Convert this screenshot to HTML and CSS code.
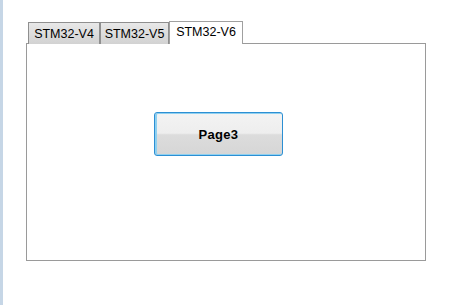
FILE: index.html
```html
<!DOCTYPE html>
<html>
<head>
<meta charset="utf-8">
<link rel="stylesheet" href="styles.css">
</head>
<body>
<div class="frame">
  <div class="sidebar"></div>
  <div class="content">
    <div class="tabs">
      <div class="tab t1">STM32-V4</div>
      <div class="tab t2">STM32-V5</div>
      <div class="tab active">STM32-V6</div>
    </div>
    <div class="panel">
      <button class="btn">Page3</button>
    </div>
  </div>
</div>
</body>
</html>
```
FILE: styles.css
```css
html, body {
  margin: 0;
  padding: 0;
  background: #ffffff;
}
.frame {
  display: flex;
  width: 465px;
  height: 305px;
}
.sidebar {
  width: 3px;
  background: #c6d6e6;
  flex: none;
}
.content {
  padding-left: 23px;
  padding-top: 21px;
  font-family: "Liberation Sans", Arial, sans-serif;
}
.tabs {
  display: flex;
  align-items: flex-end;
  margin-left: 2px;
  height: 23px;
  position: relative;
  z-index: 1;
}
.tab {
  box-sizing: border-box;
  height: 22px;
  border: 1px solid #8f8f8f;
  border-bottom: none;
  background: linear-gradient(#e8e8e8, #d2d2d2);
  font-size: 12.5px;
  color: #000;
  line-height: 20px;
  text-align: center;
  padding-top: 1px;
}
.t1 {
  width: 72px;
}
.t2 {
  width: 69px;
  border-left: 1px solid #8f8f8f;
}
.active {
  width: 74px;
  height: 23px;
  background: #ffffff;
  border-color: #a0a0a0;
  padding-top: 0;
}
.panel {
  box-sizing: border-box;
  width: 400px;
  height: 218px;
  margin-top: -1px;
  border: 1px solid #9a9a9a;
  padding-left: 127px;
  padding-top: 68px;
  background: #fff;
}
.btn {
  display: block;
  box-sizing: border-box;
  width: 129px;
  height: 44px;
  margin: 0;
  border: 1px solid #2c8fd3;
  border-radius: 3px;
  background: linear-gradient(#f3f3f3 0%, #eeeeee 48%, #dcdcdc 52%, #d6d6d6 100%);
  box-shadow: inset 1px 0 0 1px #8fd0f0;
  font-family: "Liberation Sans", Arial, sans-serif;
  font-weight: bold;
  font-size: 13px;
  letter-spacing: 0.3px;
  color: #000;
  padding: 0;
}
```
